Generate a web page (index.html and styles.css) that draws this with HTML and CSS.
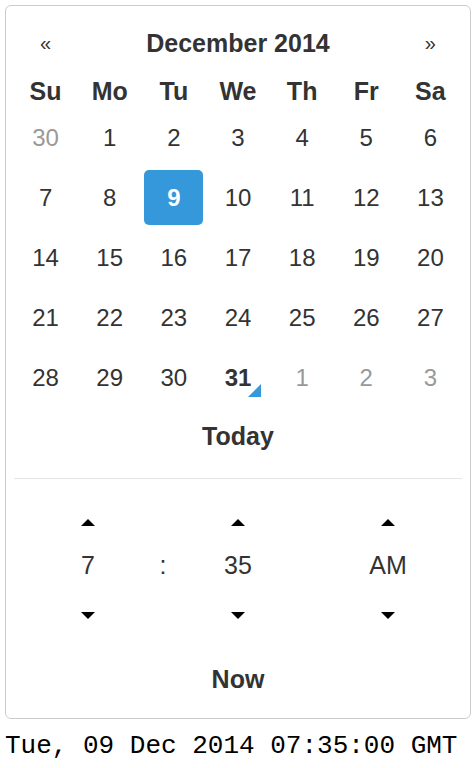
FILE: index.html
```html
<!DOCTYPE html>
<html lang="en">
<head>
    <meta charset="UTF-8">
    <meta name="viewport" content="width=device-width, initial-scale=1.0">
    <title>Date Time Picker</title>
    <link rel="stylesheet" href="styles.css">
</head>
<body>
    <!-- Picker -->
    <div class="picker">
        <div class="cal-head">
            <span class="nav">&laquo;</span>
            <span class="month">December 2014</span>
            <span class="nav">&raquo;</span>
        </div>

        <div class="weekdays">
            <span>Su</span><span>Mo</span><span>Tu</span><span>We</span><span>Th</span><span>Fr</span><span>Sa</span>
        </div>

        <div class="days">
            <span class="day old">30</span><span class="day">1</span><span class="day">2</span><span class="day">3</span><span class="day">4</span><span class="day">5</span><span class="day">6</span>
            <span class="day">7</span><span class="day">8</span><span class="day active">9</span><span class="day">10</span><span class="day">11</span><span class="day">12</span><span class="day">13</span>
            <span class="day">14</span><span class="day">15</span><span class="day">16</span><span class="day">17</span><span class="day">18</span><span class="day">19</span><span class="day">20</span>
            <span class="day">21</span><span class="day">22</span><span class="day">23</span><span class="day">24</span><span class="day">25</span><span class="day">26</span><span class="day">27</span>
            <span class="day">28</span><span class="day">29</span><span class="day">30</span><span class="day today">31</span><span class="day old">1</span><span class="day old">2</span><span class="day old">3</span>
        </div>

        <div class="picker-btn today-btn">Today</div>

        <div class="divider"></div>

        <!-- Time -->
        <div class="time">
            <span class="arrow up"></span><span></span><span class="arrow up"></span><span></span><span class="arrow up"></span>
            <span class="val">7</span><span class="val">:</span><span class="val">35</span><span></span><span class="val">AM</span>
            <span class="arrow down"></span><span></span><span class="arrow down"></span><span></span><span class="arrow down"></span>
        </div>

        <div class="picker-btn now-btn">Now</div>
    </div>

    <div class="stamp">Tue, 09 Dec 2014 07:35:00 GMT</div>
</body>
</html>
```

FILE: styles.css
```css
body {
    margin: 5px;
    font-family: "Liberation Sans", Arial, sans-serif;
    color: #333;
    background: #fff;
}

/* Picker box */
.picker {
    border: 1px solid #ccc;
    border-radius: 6px;
    padding: 7px 8px 4px;
}

.cal-head,
.weekdays,
.days {
    display: grid;
    grid-template-columns: repeat(7, 1fr);
    column-gap: 5px;
    margin: 0 2px;
    text-align: center;
}

.cal-head {
    height: 60px;
    line-height: 60px;
}

.nav {
    font-size: 20px;
}

.month {
    grid-column: 2 / 7;
    font-size: 25px;
    font-weight: bold;
}

.weekdays {
    height: 37px;
    line-height: 37px;
    font-size: 25px;
    font-weight: bold;
}

.days {
    row-gap: 5px;
}

.day {
    position: relative;
    height: 55px;
    line-height: 55px;
    font-size: 24px;
    border-radius: 5px;
}

.day.old {
    color: #999;
}

.day.active {
    background: #3498db;
    color: #fff;
    font-weight: bold;
}

.day.today {
    font-weight: bold;
}

/* little corner marker for today */
.day.today::after {
    content: '';
    position: absolute;
    right: 7px;
    bottom: 8px;
    border-style: solid;
    border-color: transparent;
    border-width: 0 0 13px 13px;
    border-bottom-color: #3498db;
}

.picker-btn {
    text-align: center;
    font-size: 25px;
    font-weight: bold;
}

.today-btn {
    height: 63px;
    line-height: 63px;
}

.divider {
    height: 1px;
    background: #e5e5e5;
    margin-top: 10px;
}

/* Time section */
.time {
    display: grid;
    grid-template-columns: repeat(5, 75px);
    grid-template-rows: 44px 42px 58px;
    justify-content: center;
    align-items: center;
    justify-items: center;
    padding-top: 21px;
}

.val {
    font-size: 25px;
}

.arrow {
    width: 0;
    height: 0;
    border-left: 7.5px solid transparent;
    border-right: 7.5px solid transparent;
}

.arrow.up {
    border-bottom: 7px solid #000;
}

.arrow.down {
    border-top: 7px solid #000;
}

.now-btn {
    height: 70px;
    line-height: 70px;
}

.stamp {
    margin-top: 12px;
    font-family: "Liberation Mono", "Courier New", monospace;
    font-size: 26px;
    line-height: 30px;
    color: #000;
    white-space: nowrap;
}
```
